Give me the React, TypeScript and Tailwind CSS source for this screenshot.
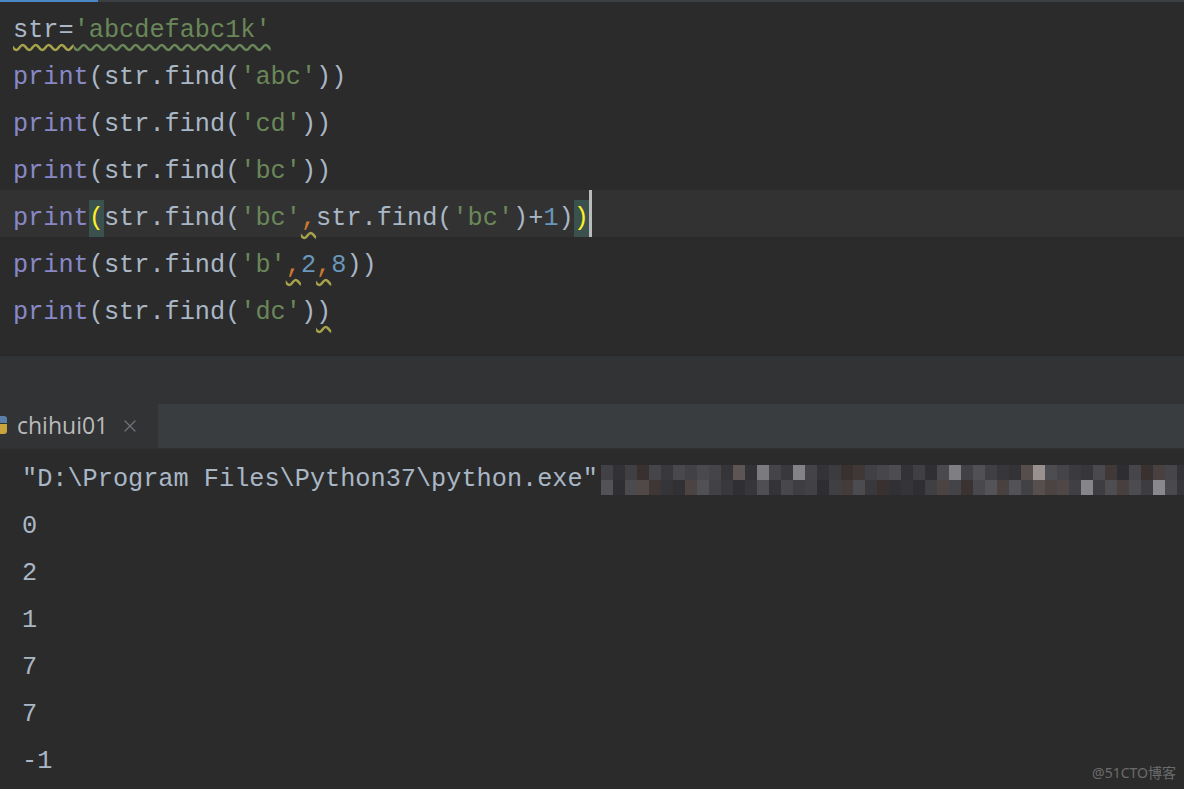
import * as React from 'react';
import { X } from 'lucide-react';

// pixelated (blurred) part of the interpreter path
const blockColors = (() => {
    let seed = 7;
    const rnd = () => {
        seed = (seed * 9301 + 49297) % 233280;
        return seed / 233280;
    };
    const rows: string[][] = [[], []];
    for (let r = 0; r < 2; r++) {
        for (let c = 0; c < 49; c++) {
            const v = rnd();
            let g = 46 + Math.floor(v * 42);
            if (v > 0.94) g = 118 + Math.floor(rnd() * 30);
            const tint = rnd() > 0.8 ? 8 : 0;
            rows[r].push(`rgb(${g + tint},${g},${g + (tint ? -2 : 4)})`);
        }
    }
    return rows;
})();

const Fn: React.FC<{ children: React.ReactNode }> = ({ children }) => (
    <span className="text-[#8888c6]">{children}</span>
);
const Str: React.FC<{ children: React.ReactNode }> = ({ children }) => (
    <span className="text-[#6a8759]">{children}</span>
);
const Num: React.FC<{ children: React.ReactNode }> = ({ children }) => (
    <span className="text-[#6897bb]">{children}</span>
);
const Comma = () => (
    <span className="text-[#cc7832] underline decoration-wavy decoration-[#a6a34b] underline-offset-[7px]">,</span>
);

const CodeRow: React.FC<{ children: React.ReactNode; active?: boolean }> = ({ children, active }) => (
    <div className={'flex h-[47px] items-center pt-[10px] pl-[13px] whitespace-pre ' + (active ? 'bg-[#323232]' : '')}>
        {children}
    </div>
);

const OutRow: React.FC<{ children: React.ReactNode }> = ({ children }) => (
    <div className="flex h-[47px] items-center pt-[3px] pl-[22px] whitespace-pre">{children}</div>
);

export default function App() {
    return (
        <div className="relative w-[1184px] h-[789px] bg-[#2b2b2b] flex flex-col overflow-hidden font-['Liberation_Mono',monospace] text-[25.25px] text-[#a9b7c6]">
            {/* top tab indicator */}
            <div className="flex h-[2px]">
                <div className="w-[98px] bg-[#4a88c7]" />
                <div className="flex-1 bg-[#3c3f41]" />
            </div>

            {/* editor */}
            <div className="h-[353px] flex flex-col">
                <CodeRow>
                    <span className="underline decoration-wavy decoration-[#a6a34b] underline-offset-[7px]">str=</span>
                    <span className="text-[#6a8759] underline decoration-wavy decoration-[#6a8759] underline-offset-[7px]">'abcdefabc1k'</span>
                </CodeRow>
                <CodeRow>
                    <Fn>print</Fn>(str.find(<Str>'abc'</Str>))
                </CodeRow>
                <CodeRow>
                    <Fn>print</Fn>(str.find(<Str>'cd'</Str>))
                </CodeRow>
                <CodeRow>
                    <Fn>print</Fn>(str.find(<Str>'bc'</Str>))
                </CodeRow>
                <CodeRow active>
                    <Fn>print</Fn>
                    <span className="bg-[#3b514d] text-[#ffef28]">(</span>str.find(<Str>'bc'</Str>
                    <Comma />
                    str.find(<Str>'bc'</Str>)+<Num>1</Num>)<span className="bg-[#3b514d] text-[#ffef28]">)</span>
                    <span className="w-[3px] h-[47px] -mt-[10px] bg-[#bbbbbb]" />
                </CodeRow>
                <CodeRow>
                    <Fn>print</Fn>(str.find(<Str>'b'</Str>
                    <Comma />
                    <Num>2</Num>
                    <Comma />
                    <Num>8</Num>))
                </CodeRow>
                <CodeRow>
                    <Fn>print</Fn>(str.find(<Str>'dc'</Str>)
                    <span className="underline decoration-wavy decoration-[#a6a34b] underline-offset-[7px]">)</span>
                </CodeRow>
            </div>

            <div className="h-px bg-[#282828]" />
            <div className="h-[48px] bg-[#313335]" />

            {/* run tab bar */}
            <div className="flex h-[44px] font-['Open_Sans',sans-serif]">
                <div className="w-[158px] bg-[#313335] flex items-center">
                    <svg width="8" height="22" viewBox="0 0 8 22" className="mt-[-2px]">
                        <path d="M0 2 H4 Q7 2 7 5 V9 H0 Z" fill="#5b7fa8" />
                        <path d="M0 10 H7 V17 Q7 20 4 20 H0 Z" fill="#c9a43c" />
                    </svg>
                    <span className="ml-[9px] text-[23px] text-[#bbbbbb] leading-none pb-[2px]">chihui01</span>
                    <X size={20} strokeWidth={1.5} className="ml-[12px] text-[#6f737a]" />
                </div>
                <div className="flex-1 bg-[#3a3d40]" />
            </div>
            <div className="h-px bg-[#2f3133]" />

            {/* console */}
            <div className="flex flex-col pt-[6px]">
                <OutRow>
                    <span>"D:\Program Files\Python37\python.exe"</span>
                    <div className="ml-[3px] flex flex-col">
                        {blockColors.map((row, r) => (
                            <div key={r} className="flex">
                                {row.map((c, i) => (
                                    <div key={i} className="w-[12px] h-[15px]" style={{ backgroundColor: c }} />
                                ))}
                            </div>
                        ))}
                    </div>
                </OutRow>
                <OutRow>0</OutRow>
                <OutRow>2</OutRow>
                <OutRow>1</OutRow>
                <OutRow>7</OutRow>
                <OutRow>7</OutRow>
                <OutRow>-1</OutRow>
            </div>

            <div className="absolute right-[8px] bottom-[9px] text-[14px] text-[#6b6b6b] font-['Noto_Sans','Noto_Sans_CJK_SC',sans-serif] leading-none">
                @51CTO博客
            </div>
        </div>
    );
}
